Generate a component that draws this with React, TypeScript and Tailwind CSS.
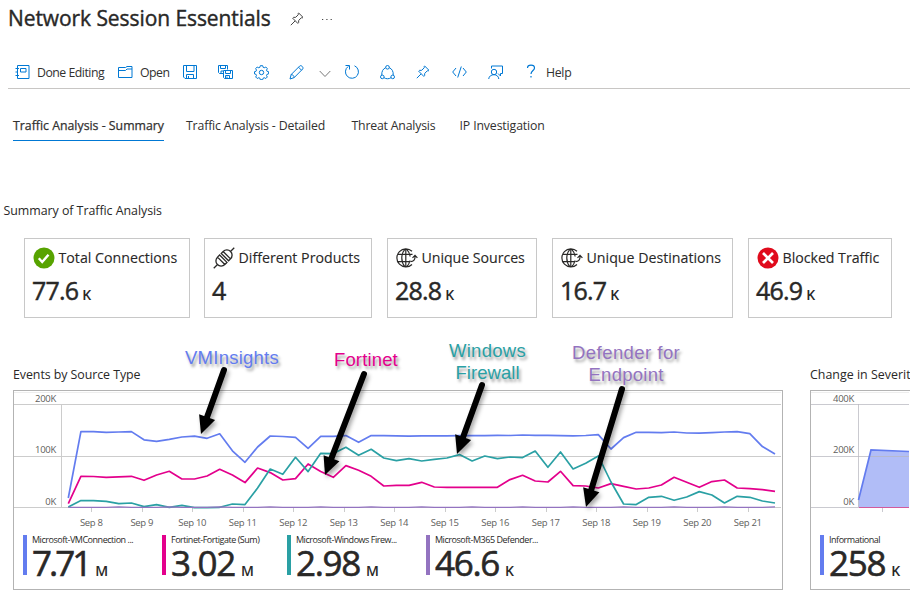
import type { ReactNode } from "react";

const STEP = 12.62;
const START = 68.3;

const vm = [497.7, 431.3, 431.4, 432, 431.7, 431.3, 439.5, 441, 439, 436.7, 435.8, 438, 433.5, 450.5, 462, 446.7, 435.7, 436.2, 437, 448, 436, 436, 435.3, 442, 435.3, 435.3, 435.5, 435.8, 435.6, 435.5, 435.5, 435.4, 435.4, 435.3, 435, 435.2, 434.7, 435, 435.1, 435.4, 435.5, 435.2, 434.3, 448.7, 437.3, 432, 432, 432.3, 431.7, 432.7, 432.8, 432.3, 431.7, 431.3, 433.3, 446.3, 453.7];
const fortinet = [503.3, 476, 476.2, 477, 476.5, 476, 480, 474.7, 471, 478.7, 478.7, 475.7, 469, 474.7, 482.3, 467.7, 472.3, 479.7, 478.3, 463.7, 471.3, 477, 465.3, 470, 476, 485.7, 485, 485, 482, 486.7, 487, 487, 487, 487, 487, 479.3, 475, 480.7, 481.7, 471, 485.3, 485.7, 487.7, 483.3, 486, 488.7, 487.7, 484.7, 477, 482, 487, 481.3, 479.7, 487.7, 488.3, 489.3, 491];
const firewall = [506.7, 500.3, 500.4, 501, 503.3, 502.7, 506.3, 504.3, 507, 505, 507.3, 507.3, 507, 503.7, 504.3, 487.7, 468.7, 474, 457, 471.3, 453, 453.3, 447, 455, 449, 457.7, 460.3, 458.3, 460.7, 459, 457.7, 454.3, 460.7, 455.7, 458.3, 456.7, 457.3, 450.7, 467, 451.7, 468.7, 463, 455.7, 481.7, 503.7, 504.3, 497, 496, 500, 496.7, 491.3, 494.7, 502.7, 496, 497, 500.7, 502.7];
const defender = vm.map((_, i) => (i % 4 === 0 && i > 0 ? 506.5 : 507.1));

// Chart coordinates are kept in page units; the panel's drawing starts at (14, 391).
const toPoints = (ys: number[]) => ys.map((y, i) => `${(START + i * STEP - 14).toFixed(1)},${(y - 390.7).toFixed(1)}`).join(" ");

function Icon({ w = 14, h = 14, className = "", children }: { w?: number; h?: number; className?: string; children: ReactNode }) {
  return (
    <svg width={w} height={h} viewBox={`0 0 ${w} ${h}`} fill="none" stroke="currentColor" strokeWidth="1" className={`shrink-0 ${className}`}>
      {children}
    </svg>
  );
}

function PinShape() {
  return <path d="M8.700 1 13 5.300 12.200 6 11.300 5.800 8.700 8.400 8.600 10.600 7.800 11.400 2.700 6.200 3.500 5.400 5.700 5.300 8.300 2.700 8 1.800ZM5.100 8.900.8 13.200" />;
}

function Header() {
  return (
    <header className="flex h-[38px] items-center pl-[8px]">
      <h1 className="-mt-[2px] w-[263px] text-[21px] leading-[36px] tracking-[-0.080px] whitespace-nowrap text-[#292827] [-webkit-text-stroke:0.400px_#292827]">Network Session Essentials</h1>
      <Icon className="ml-[19px] text-[#444]"><PinShape /></Icon>
      <Icon w={12} h={4} className="ml-[17px] text-[#444]">
        <path d="M1 2.500h1.200M5.300 2.500h1.200M9.600 2.500h1.200" strokeWidth="1.200" />
      </Icon>
    </header>
  );
}

function Toolbar() {
  return (
    <div className="mt-[18px] ml-2 flex h-[33px] items-center border-b border-[#c8c6c4] pl-[7px] text-[12.300px] leading-[20px] tracking-[-0.300px] whitespace-nowrap text-[#323130]">
      <Icon w={15} className="text-[#0078d4]">
        <path d="M2.500.5h11.500v13H2.500ZM5.500 3.500h5.500v3.500H5.500ZM.5 3.500h3.500M.5 7h2M.5 10.500h3.500" />
      </Icon>
      <span className="mt-[2px] ml-[7px] w-[68px] tracking-[-0.500px]">Done Editing</span>
      <Icon w={15} className="ml-[13px] text-[#0078d4]">
        <path d="M.5 2.500h7l1.500-1h5v11H.5ZM.5 5.500h7l1.500-1.500h5" />
      </Icon>
      <span className="mt-[2px] ml-[7px] w-[29px] tracking-[-0.500px]">Open</span>
      <Icon className="ml-[14px] text-[#0078d4]">
        <path d="M.5.5h13v13H2L.5 12ZM3.500.5v6h7.500v-6M3.500 13.500v-4h7v4M5.500 11v2.500" />
      </Icon>
      <Icon w={15} className="ml-[21px] text-[#0078d4]">
        <path d="M5 8.500H1.500l-1-1v-7h9v4M2.500.5v3h5v-3M3 8.500v-2.500h2M5.500 5.500h9v8h-8l-1-1ZM7.500 5.500v3h5v-3M7.500 13.500v-3h4v3M9 11.500v2" />
      </Icon>
      <Icon w={15} h={15} className="ml-[20.500px] text-[#0078d4]">
        <circle cx="7.500" cy="7.500" r="2.200" />
        <path d="M6.300.7h2.400l.5 1.700 1 .4 1.600-.8 1.500 1.600-.8 1.600.4 1 1.700.5v2.200l-1.700.5-.4 1 .8 1.600-1.500 1.500-1.600-.8-1 .4-.5 1.600H6.300l-.5-1.600-1-.4-1.600.8L1.700 12l.8-1.600-.4-1-1.600-.5V6.700l1.600-.5.4-1L1.700 3.600l1.500-1.600 1.600.8 1-.4Z" />
      </Icon>
      <Icon w={15} h={15} className="ml-[20.500px] text-[#0078d4]">
        <path d="M1 14l1.200-4.500L10.800.9c1.300-1 4.100 1.300 2.900 3.100L5.200 12.600ZM9.500 2.200l3 3M2.200 9.500c1.700.2 2.800 1.300 3 3.100" />
      </Icon>
      <Icon w={12} h={8} className="mt-[3px] ml-[14.500px] text-[#777]"><path d="M.7 1 6 6.500 11.300 1" /></Icon>
      <Icon w={16} h={16} className="ml-[13px] text-[#0078d4]">
        <path d="M10.500 1.800A6.500 6.500 0 1 1 4.300 2.400M1.500 1.500h4v4" />
      </Icon>
      <Icon w={15} h={15} className="ml-[20.500px] text-[#0078d4]">
        <circle cx="7.500" cy="2.300" r="1.800" /><circle cx="2.300" cy="11.900" r="1.800" /><circle cx="12.700" cy="11.900" r="1.800" />
        <path d="M5.700 2.700C3 3.800 1.500 6.500 1.800 10.100M9.300 2.700c2.700 1.100 4.200 3.800 3.900 7.400M4 12.700c2 1.400 5 1.400 7 0" />
      </Icon>
      <Icon w={15} h={15} className="ml-[21px] text-[#0078d4]"><PinShape /></Icon>
      <Icon w={15} h={12} className="ml-[21px] text-[#0078d4]">
        <path d="M4 2 .7 6 4 10M11 2l3.300 4L11 10M9.300.5l-3.600 11" />
      </Icon>
      <Icon w={15} h={15} className="ml-[21px] text-[#0078d4]">
        <path d="M3.500 3.500v-2.500h11v7.500h-2v2.500l-2.500-2.500" />
        <circle cx="6" cy="7" r="2.700" />
        <path d="M.7 14c.3-2.800 2.500-4.300 5.300-4.300s4.500 1.700 4.800 4.300" />
      </Icon>
      <Icon w={10} h={15} className="-mt-[1px] ml-[23px] text-[#0078d4]">
        <path d="M1.500 4C1.500.2 8.500.2 8.500 4 8.500 6.300 5 6.800 5 10M5 12v1.500" strokeWidth="1.200" />
      </Icon>
      <span className="mt-[2px] ml-[10px]">Help</span>
    </div>
  );
}

function Tabs() {
  return (
    <nav className="mt-[27px] flex h-[25px] pl-[13px] text-[12.300px] leading-[20px] whitespace-nowrap text-[#323130]">
      <span className="h-[25px] w-[151px] border-b border-[#0078d4] tracking-[0.010px] [-webkit-text-stroke:0.250px_#323130]">Traffic Analysis - Summary</span>
      <span className="ml-[22px] w-[139px] tracking-[-0.160px]">Traffic Analysis - Detailed</span>
      <span className="ml-[26.500px] w-[84px] tracking-[-0.200px]">Threat Analysis</span>
      <span className="ml-[24px] tracking-[-0.130px]">IP Investigation</span>
    </nav>
  );
}

function StatusIcon({ ok }: { ok: boolean }) {
  return (
    <Icon w={22} h={22}>
      <circle cx="11" cy="11" r="10.500" stroke="none" fill={ok ? "#57a300" : "#e00b1c"} />
      {ok ? <path d="m5.800 11.300 3.400 3.700 6.300-7.300" stroke="#fff" strokeWidth="2.400" /> : <path d="m6 6 10 10M16 6 6 16" stroke="#fff" strokeWidth="2.700" />}
    </Icon>
  );
}

function PlugIcon() {
  return (
    <Icon w={22} h={22} className="text-[#292827]">
      <g transform="rotate(-45 11 11)" strokeWidth="1.300">
        <path d="M-3.500 11H1.500M20.500 11h5M10 5.800H7a5.300 5.200 0 0 0 0 10.400h3ZM12.300 5.800H15a5.300 5.200 0 0 1 0 10.400h-2.700ZM7 5.800v10.400M15 5.800v10.400" />
      </g>
    </Icon>
  );
}

function GlobeIcon() {
  return (
    <Icon w={22} h={22} className="text-[#292827]">
      <path d="M16 4.300A9 9 0 1 0 16 17.500M9 2.200c-4.300 5-4.300 12.600 0 17.600M10.600 2.200c2 2.200 3.200 4.700 3.500 7.300M14 13.500c-.5 2.500-1.700 4.600-3.400 6.300M9.800 2v18M2 7.300h14.500M2 14.700h12M14.500 14.700c3-.3 4.500-1.700 4.500-4.500V8.500M16.500 10.800 19 8.300l2.400 2.500" strokeWidth="1.200" />
    </Icon>
  );
}

function Card({ box, icon, title, value, unit }: { box: string; icon: ReactNode; title: string; value: string; unit?: string }) {
  return (
    <section className={`h-[80px] shrink-0 border border-[#c8c8c8] pt-[8px] pl-[8px] text-[#292827] ${box}`}>
      <div className="flex h-[22px] items-center gap-[3.500px]">
        {icon}
        <span className="text-[14.200px] leading-[22px] whitespace-nowrap [-webkit-text-stroke:0.120px_#292827]">{title}</span>
      </div>
      <div className="mt-[4px] -ml-px flex items-baseline text-[25px] leading-[34px]">
        <span className="tracking-[-0.800px] [-webkit-text-stroke:0.450px_#292827]">{value}</span>
        {unit && <span className="ml-[4px] text-[14px] font-semibold">{unit}</span>}
      </div>
    </section>
  );
}

function Legend({ bar, box, label, value, unit, fit = "tracking-[-1.300px]" }: { bar: string; box: string; label: string; value: string; unit: string; fit?: string }) {
  return (
    <div className={`flex h-[40px] shrink-0 ${box}`}>
      <div className={`h-[40px] w-[4px] shrink-0 ${bar}`} />
      <div className="ml-[5px] text-[#292827]">
        <div className="text-[9px] leading-[10px] tracking-[-0.470px] whitespace-nowrap">{label}</div>
        <div className="flex items-baseline text-[35px] leading-[36px]">
          <span className={`[-webkit-text-stroke:0.600px_#292827] ${fit}`}>{value}</span>
          <span className="ml-[6px] text-[14px] font-semibold">{unit}</span>
        </div>
      </div>
    </div>
  );
}

function AxisText({ x, y, end, children }: { x: number; y: number; end?: boolean; children: string }) {
  return (
    <text x={x} y={y} textAnchor={end ? "end" : "middle"} className="fill-[#605e5c] text-[9.500px] tracking-[-0.300px]">{children}</text>
  );
}

function EventsChart() {
  const days = Array.from({ length: 14 }, (_, i) => i);
  return (
    <svg width="768" height="138" viewBox="0 0 768 138" className="block shrink-0">
      <path d="M0 1.500h767" stroke="#eee" />
      <path d="M0 13.500h767M0 65.500h767M0 116.500h767M47.500 13v103" stroke="#ccc" fill="none" />
      {days.map((d) => (
        <g key={d}>
          <path d={`M${Math.round(77 + d * 50.5) + 0.5} 117v4`} stroke="#ccc" />
          <AxisText x={77.3 + d * 50.5} y={135}>{`Sep ${8 + d}`}</AxisText>
        </g>
      ))}
      <AxisText x={42} y={11} end>200K</AxisText>
      <AxisText x={42} y={62} end>100K</AxisText>
      <AxisText x={42} y={114} end>0K</AxisText>
      <g fill="none" strokeWidth="1.700" strokeLinejoin="round">
        <polyline points={toPoints(vm)} stroke="#637cef" />
        <polyline points={toPoints(fortinet)} stroke="#e3008c" />
        <polyline points={toPoints(firewall)} stroke="#2aa0a4" />
        <polyline points={toPoints(defender)} stroke="#9373c0" strokeWidth="1.200" />
      </g>
    </svg>
  );
}

function SeverityChart() {
  return (
    <svg width="98" height="138" viewBox="0 0 98 138" className="block shrink-0">
      <path d="M0 1.500h98" stroke="#eee" />
      <path d="M47.500 109 60 59 98 60.500V116.500H47.500Z" fill="#637cef" fillOpacity=".5" />
      <path d="M0 13.500h98M0 65.500h98M0 116.500h98M47.500 13v103M71.500 117v4" stroke="#b8b8c0" strokeOpacity=".75" fill="none" />
      <path d="M47.500 109 60 59 98 60.500" fill="none" stroke="#637cef" strokeWidth="1.700" />
      <path d="M48 116.500h50" stroke="#d35a9c" />
      <AxisText x={43} y={11} end>400K</AxisText>
      <AxisText x={43} y={62} end>200K</AxisText>
      <AxisText x={43} y={114} end>0K</AxisText>
    </svg>
  );
}

function Arrow({ x1, y1, x2, y2 }: { x1: number; y1: number; x2: number; y2: number }) {
  const len = Math.hypot(x2 - x1, y2 - y1);
  const angle = (Math.atan2(y2 - y1, x2 - x1) * 180) / Math.PI;
  return (
    <g transform={`translate(${x1} ${y1}) rotate(${angle})`}>
      <path d={`M0 0H${len - 14}`} stroke="#000" strokeWidth="6" strokeLinecap="round" />
      <path d={`M${len} 0 ${len - 18} -8.500V8.500Z`} fill="#000" />
    </g>
  );
}

function Annotations() {
  const note = "absolute font-['Liberation_Sans',sans-serif] text-[18.500px] leading-[22px] whitespace-nowrap [text-shadow:2px_3px_3px_rgba(0,0,0,0.38)]";
  return (
    <>
      <svg width="910" height="600" viewBox="0 0 910 600" className="pointer-events-none absolute top-0 left-0 drop-shadow-[2px_3px_2px_rgba(0,0,0,0.35)]">
        <Arrow x1={224} y1={370} x2={201} y2={434} />
        <Arrow x1={364} y1={374} x2={325} y2={475} />
        <Arrow x1={482} y1={385} x2={457} y2={454} />
        <Arrow x1={622} y1={389} x2={586} y2={507} />
      </svg>
      <div className={`${note} top-[347px] left-[185px] tracking-[0.250px] text-[#637cef]`}>VMInsights</div>
      <div className={`${note} top-[349px] left-[334px] tracking-[0.140px] text-[#e3008c]`}>Fortinet</div>
      <div className={`${note} top-[340px] left-[449px] text-center text-[#2aa0a4]`}>
        <div className="tracking-[0.270px]">Windows</div>
        <div className="tracking-[0.050px]">Firewall</div>
      </div>
      <div className={`${note} top-[342px] left-[572px] text-center text-[#9373c0]`}>
        <div className="tracking-[0.450px]">Defender for</div>
        <div className="tracking-[0.270px]">Endpoint</div>
      </div>
    </>
  );
}

export default function App() {
  return (
    <main className="relative flex h-[600px] w-[910px] flex-col overflow-hidden bg-white font-['Open_Sans','Noto_Sans',sans-serif] text-[#292827]">
      <Header />
      <Toolbar />
      <Tabs />
      <h2 className="mt-[60px] pl-[3.500px] text-[12.400px] leading-[20px] tracking-[-0.040px]">Summary of Traffic Analysis</h2>
      <div className="mt-[17px] flex pl-[24px]">
        <Card box="w-[166px]" icon={<StatusIcon ok />} title="Total Connections" value="77.6" unit="K" />
        <Card box="ml-[14px] w-[168px]" icon={<PlugIcon />} title="Different Products" value="4" />
        <Card box="ml-[15px] w-[150px] tracking-[-0.050px]" icon={<GlobeIcon />} title="Unique Sources" value="28.8" unit="K" />
        <Card box="ml-[15px] w-[181px]" icon={<GlobeIcon />} title="Unique Destinations" value="16.7" unit="K" />
        <Card box="ml-[15px] w-[144px] tracking-[-0.030px]" icon={<StatusIcon ok={false} />} title="Blocked Traffic" value="46.9" unit="K" />
      </div>
      <div className="mt-[47px] flex pl-[13px]">
        <section className="w-[770px] shrink-0">
          <h3 className="h-[25px] text-[12.400px] leading-[20px] tracking-[-0.060px]">Events by Source Type</h3>
          <div className="h-[200px] border border-[#b3b3b3]">
            <EventsChart />
            <div className="mt-[6px] flex pl-[9px]">
              <Legend bar="bg-[#637cef]" box="w-[139px]" label="Microsoft-VMConnection ..." value="7.71" unit="M" fit="tracking-[-3px] [word-spacing:0px]" />
              <Legend bar="bg-[#e3008c]" box="w-[125px]" label="Fortinet-Fortigate (Sum)" value="3.02" unit="M" />
              <Legend bar="bg-[#2aa0a4]" box="w-[139px]" label="Microsoft-Windows Firew..." value="2.98" unit="M" />
              <Legend bar="bg-[#9373c0]" box="w-[139px]" label="Microsoft-M365 Defender..." value="46.6" unit="K" />
            </div>
          </div>
        </section>
        <section className="ml-[27px] w-[160px] shrink-0">
          <h3 className="h-[25px] text-[12.400px] leading-[20px] tracking-[0.020px] whitespace-nowrap">Change in Severity</h3>
          <div className="h-[200px] overflow-hidden border border-[#b3b3b3]">
            <SeverityChart />
            <div className="mt-[6px] flex pl-[9px]">
              <Legend bar="bg-[#637cef]" box="" label="Informational" value="258" unit="K" />
            </div>
          </div>
        </section>
      </div>
      <Annotations />
    </main>
  );
}
